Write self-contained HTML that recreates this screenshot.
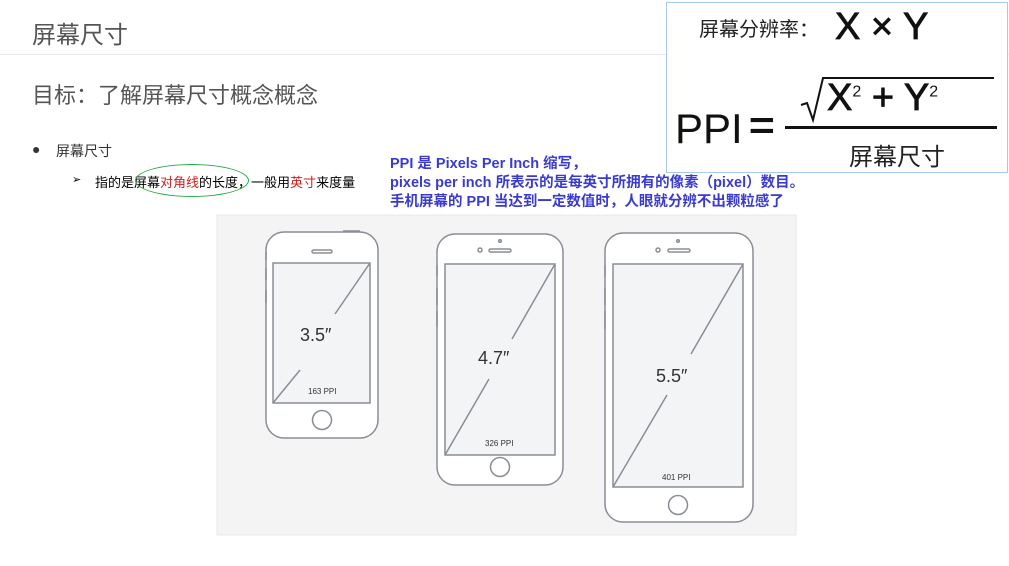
<!DOCTYPE html>
<html><head><meta charset="utf-8"><style>
body{margin:0;width:1009px;height:566px;background:#fff;position:relative;overflow:hidden;font-family:"Liberation Sans","Noto Sans CJK SC",sans-serif}
.a{position:absolute;white-space:nowrap}
</style></head><body>
<div class="a" style="left:32px;top:15px;font-size:24px;color:#555">屏幕尺寸</div>
<div class="a" style="left:0;top:54px;width:1009px;height:1px;background:#e6e6e6"></div>
<div class="a" style="left:32px;top:78px;font-size:22px;color:#555">目标：了解屏幕尺寸概念概念</div>
<div class="a" style="left:32px;top:141px;font-size:14px;color:#333">●</div>
<div class="a" style="left:56px;top:141px;font-size:14px;color:#333">屏幕尺寸</div>
<div class="a" style="left:72px;top:173px;font-size:11px;color:#000">➢</div>
<div class="a" style="left:95px;top:172px;font-size:13px;color:#000">指的是屏幕<span style="color:#d02020">对角线</span>的长度，一般用<span style="color:#d02020">英寸</span>来度量</div>
<div class="a" style="left:135px;top:164px;width:112px;height:31px;border:1.5px solid #2aa84a;border-radius:50%"></div>
<div class="a" style="left:390px;top:155px;font-size:14.5px;font-weight:bold;color:#3a3ad0;line-height:19px">PPI 是 Pixels Per Inch 缩写，<br>pixels per inch 所表示的是每英寸所拥有的像素（pixel）数目。<br>手机屏幕的 PPI 当达到一定数值时，人眼就分辨不出颗粒感了</div>
<div class="a" style="left:666px;top:2px;width:340px;height:169px;border:1px solid #a9c8f0;background:#fff">
<div class="a" style="left:32px;top:10px;font-size:20px;color:#222">屏幕分辨率：</div>
<div class="a" style="left:168px;top:3px;font-size:38px;color:#111;-webkit-text-stroke:0.8px #111">X × Y</div>
<div class="a" style="left:8px;top:102px;font-size:42px;color:#111">PPI</div>
<div class="a" style="left:82px;top:98px;font-size:44px;color:#111;-webkit-text-stroke:1px #111">=</div>
<div class="a" style="left:118px;top:123px;width:212px;height:2.5px;background:#111"></div>
<svg class="a" style="left:132px;top:72px" width="200" height="50"><polyline points="2,30 8,28 14,45 24,3 195,3" fill="none" stroke="#111" stroke-width="2"/></svg>
<div class="a" style="left:160px;top:74px;font-size:38px;color:#111;-webkit-text-stroke:0.8px #111">X<sup style="font-size:16px;-webkit-text-stroke:0">2</sup> + Y<sup style="font-size:16px;-webkit-text-stroke:0">2</sup></div>
<div class="a" style="left:182px;top:134px;font-size:24px;color:#222">屏幕尺寸</div>
</div>
<svg class="a" style="left:0;top:0" width="1009" height="566">
<rect x="217" y="215" width="579" height="320" fill="#f4f4f4" stroke="#e8e8e8"/>
<g fill="none" stroke="#8a8d95" stroke-width="1.5">
<rect x="266" y="232" width="112" height="206" rx="18" fill="#fff"/>
<rect x="273" y="263" width="97" height="140" fill="#f3f4f6"/>
<line x1="273" y1="403" x2="300" y2="370"/><line x1="335" y1="314" x2="370" y2="263"/>
<rect x="312" y="250" width="20" height="3" rx="1.5"/>
<circle cx="322" cy="420" r="9.5"/>
<line x1="266" y1="252" x2="266" y2="260"/><line x1="266" y1="268" x2="266" y2="280"/><line x1="266" y1="290" x2="266" y2="303"/>
<line x1="343" y1="231" x2="360" y2="231"/>
<rect x="437" y="234" width="126" height="251" rx="18" fill="#fff"/>
<rect x="445" y="264" width="110" height="191" fill="#f3f4f6"/>
<line x1="445" y1="455" x2="489" y2="379"/><line x1="512" y1="339" x2="555" y2="264"/>
<rect x="489" y="249" width="22" height="3" rx="1.5"/><circle cx="480" cy="250" r="2"/><circle cx="500" cy="241" r="1.3"/>
<circle cx="500" cy="467" r="9.5"/>
<line x1="437" y1="265" x2="437" y2="276"/><line x1="437" y1="288" x2="437" y2="305"/><line x1="437" y1="311" x2="437" y2="327"/>
<rect x="605" y="233" width="148" height="289" rx="18" fill="#fff"/>
<rect x="613" y="264" width="130" height="223" fill="#f3f4f6"/>
<line x1="613" y1="487" x2="667" y2="395"/><line x1="691" y1="354" x2="743" y2="264"/>
<rect x="668" y="249" width="22" height="3" rx="1.5"/><circle cx="658" cy="250" r="2"/><circle cx="678" cy="241" r="1.3"/>
<circle cx="678" cy="505" r="9.5"/>
<line x1="605" y1="265" x2="605" y2="277"/><line x1="605" y1="288" x2="605" y2="305"/><line x1="605" y1="311" x2="605" y2="329"/>
</g>
<g fill="#333" font-family="Liberation Sans, sans-serif">
<text x="300" y="341" font-size="18">3.5″</text>
<text x="308" y="394" font-size="8">163 PPI</text>
<text x="478" y="364" font-size="18">4.7″</text>
<text x="485" y="446" font-size="8">326 PPI</text>
<text x="656" y="382" font-size="18">5.5″</text>
<text x="662" y="480" font-size="8">401 PPI</text>
</g>
</svg>
</body></html>
